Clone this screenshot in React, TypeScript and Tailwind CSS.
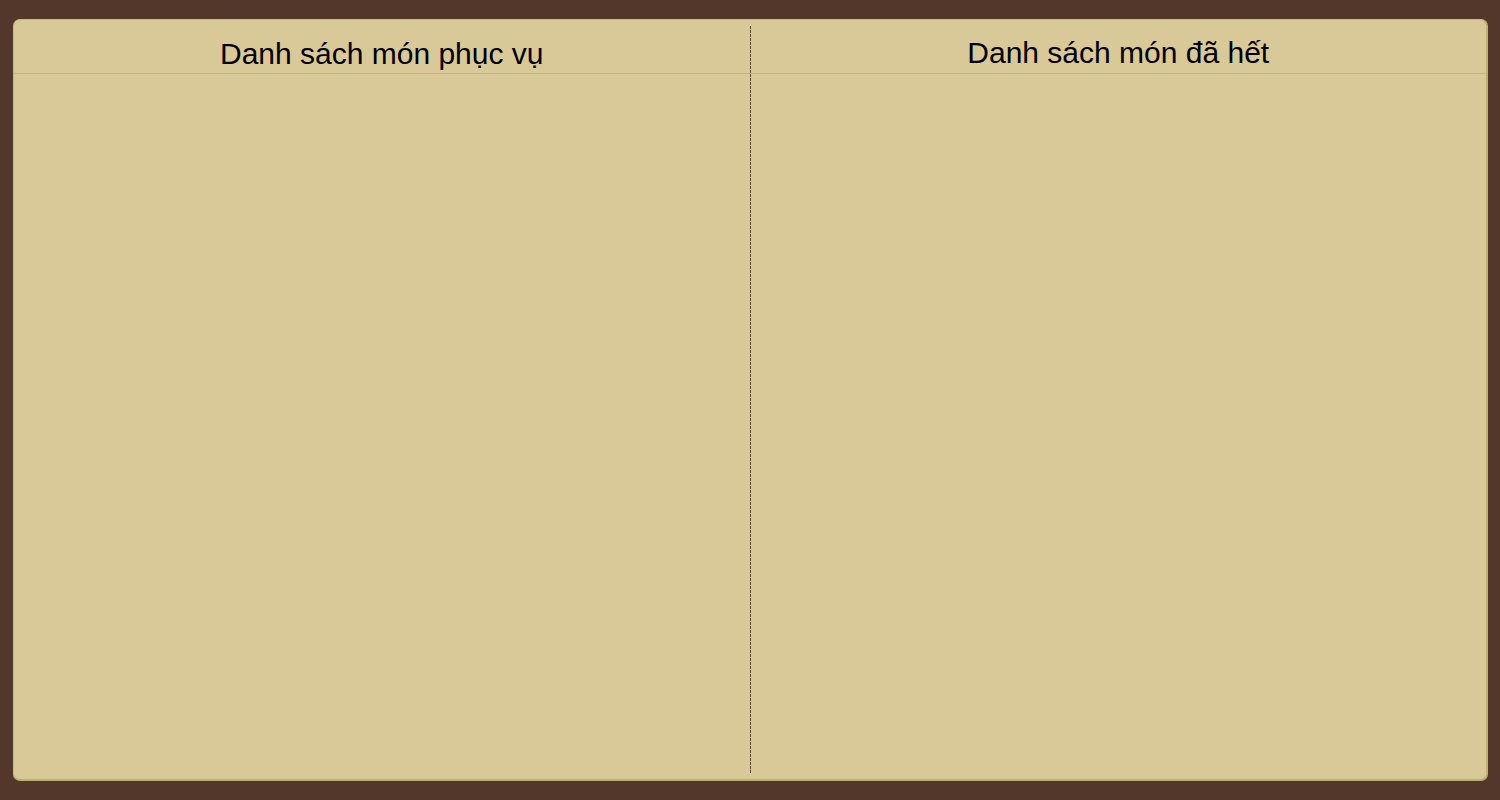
import React from "react";

export default function App() {
  return (
    <div className="w-[1500px] h-[800px] bg-[#54372b] pt-[19px] pl-[13px]" style={{ fontFamily: '"Liberation Sans", Arial, sans-serif' }}>
      <div className="w-[1475px] h-[762px] bg-[#dac998] rounded-[7px] border-t border-l border-r-[2px] border-b-[2px] border-t-[#c9b886] border-l-[#c9b886] border-r-[#bfae72] border-b-[#bfae72] flex overflow-hidden">
        <div className="flex-1 flex flex-col">
          <div className="h-[54px] pt-[18px] border-b border-[#c6b582] text-center text-[30px] leading-[32px] text-black">
            Danh sách món phục vụ
          </div>
          <div className="flex-1" />
        </div>
        <div className="w-px my-[6px] bg-[repeating-linear-gradient(to_bottom,#5e4b32_0px,#5e4b32_3px,#b8a676_3px,#b8a676_4px)]" />
        <div className="flex-1 flex flex-col">
          <div className="h-[54px] pt-[17px] border-b border-[#c6b582] text-center text-[30px] leading-[32px] text-black">
            Danh sách món đã hết
          </div>
          <div className="flex-1" />
        </div>
      </div>
    </div>
  );
}
